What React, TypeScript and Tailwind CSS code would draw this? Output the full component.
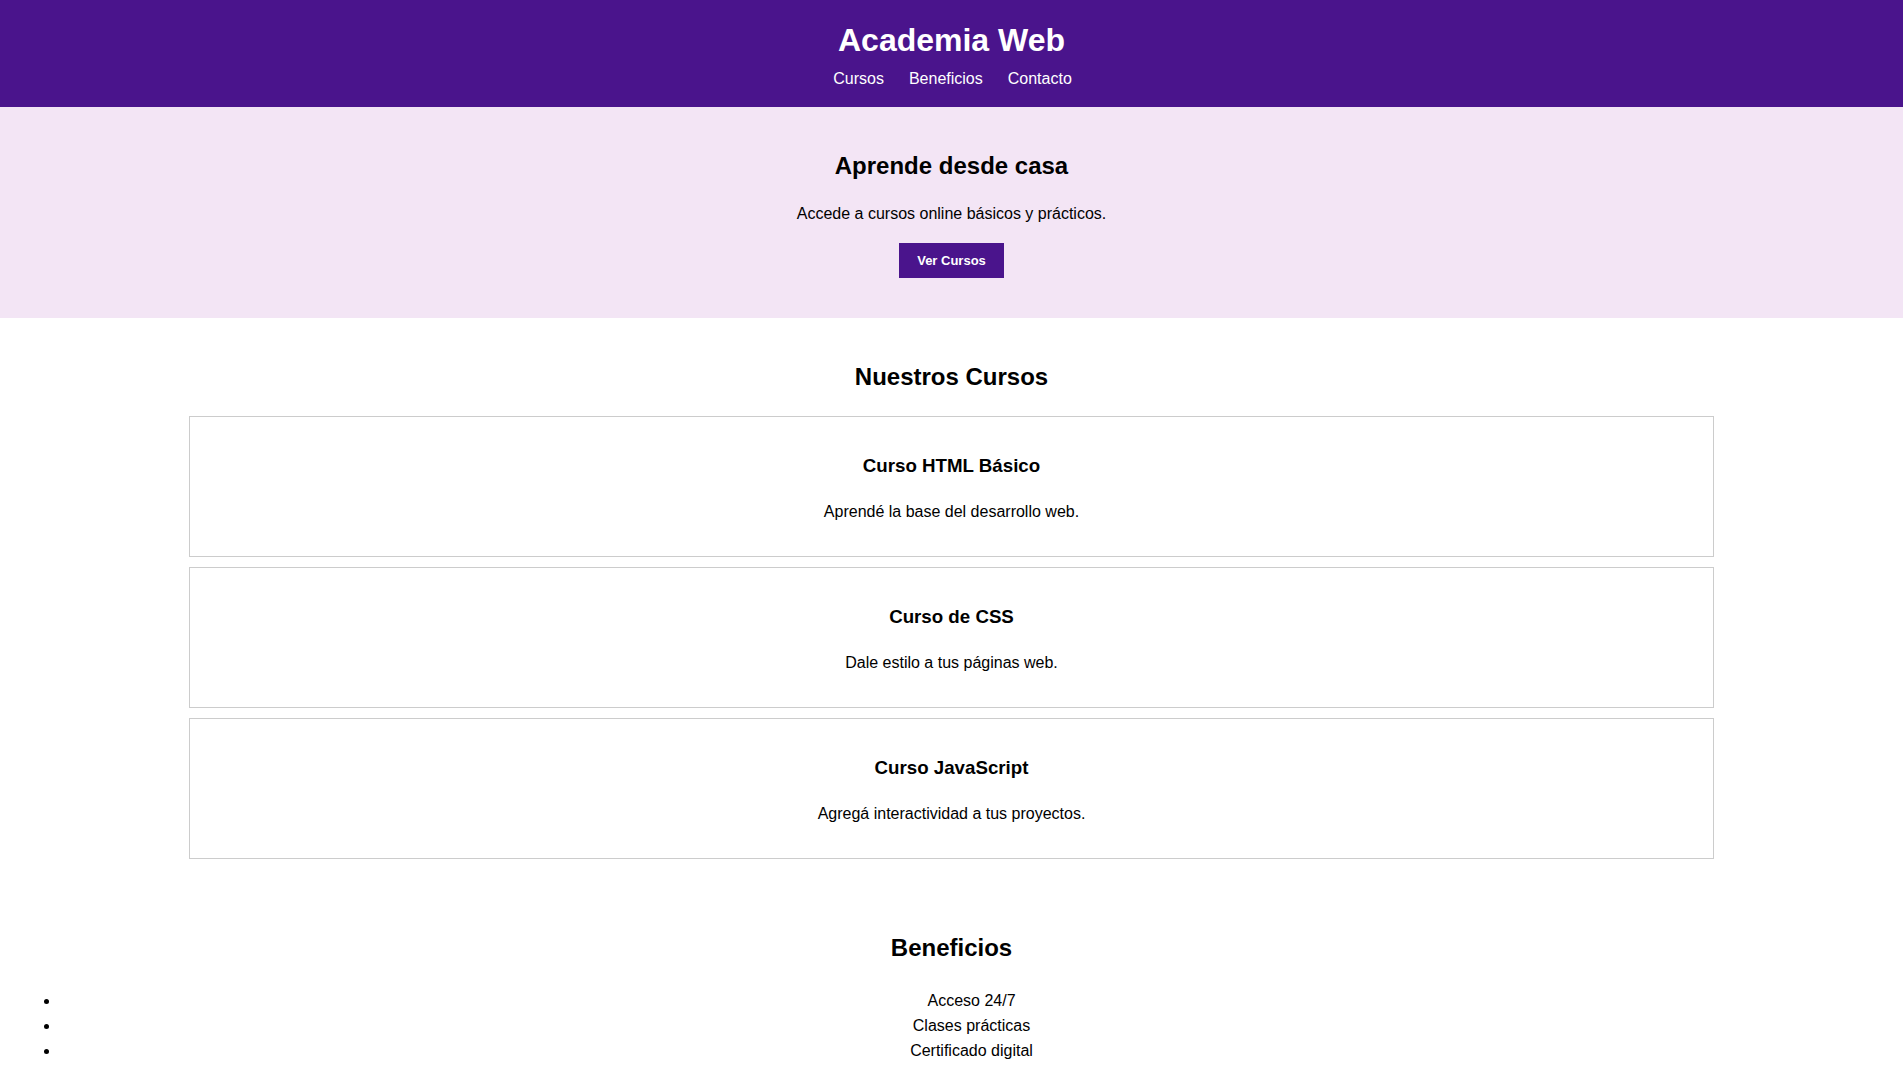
const cursos = [
  { titulo: 'Curso HTML Básico', texto: 'Aprendé la base del desarrollo web.' },
  { titulo: 'Curso de CSS', texto: 'Dale estilo a tus páginas web.' },
  { titulo: 'Curso JavaScript', texto: 'Agregá interactividad a tus proyectos.' },
];

const beneficios = ['Acceso 24/7', 'Clases prácticas', 'Certificado digital'];

export default function App() {
  return (
    <div className="min-h-screen bg-white text-black font-['Liberation_Sans',Arial,sans-serif]">
      <header className="bg-[#4a148c] text-white text-center pt-[22px] pb-[19px]">
        <h1 className="text-[32px] font-bold leading-[36px] mb-[12px]">Academia Web</h1>
        <nav className="flex justify-center gap-[25px] text-[16px] leading-[18px] pl-[2px]">
          <a href="#cursos">Cursos</a>
          <a href="#beneficios">Beneficios</a>
          <a href="#contacto">Contacto</a>
        </nav>
      </header>

      <section className="bg-[#f3e5f5] text-center pt-[45px] pb-[40px]">
        <h2 className="text-[24px] font-bold leading-[28px] mb-[25px]">Aprende desde casa</h2>
        <p className="text-[16px] leading-[18px] mb-[20px]">Accede a cursos online básicos y prácticos.</p>
        <button className="bg-[#4a148c] text-white font-bold text-[13px] leading-[15px] h-[35px] px-[18px]">
          Ver Cursos
        </button>
      </section>

      <section id="cursos" className="text-center pt-[45px] pb-[40px]">
        <h2 className="text-[24px] font-bold leading-[28px] mb-[25px]">Nuestros Cursos</h2>
        <div className="flex flex-col gap-[10px]">
          {cursos.map((c) => (
            <div
              key={c.titulo}
              className="w-[calc(80%+2px)] mx-auto border border-[#cccccc] pt-[38px] pb-[35px] px-[20px]"
            >
              <h3 className="text-[18.72px] font-bold leading-[22px] mb-[26px]">{c.titulo}</h3>
              <p className="text-[16px] leading-[18px]">{c.texto}</p>
            </div>
          ))}
        </div>
      </section>

      <section id="beneficios" className="text-center pt-[35px] pb-[20px] px-[20px]">
        <h2 className="text-[24px] font-bold leading-[28px] mb-[26px]">Beneficios</h2>
        <ul className="list-disc pl-[40px] text-[16px] leading-[25px]">
          {beneficios.map((b) => (
            <li key={b}>{b}</li>
          ))}
        </ul>
      </section>
    </div>
  );
}
